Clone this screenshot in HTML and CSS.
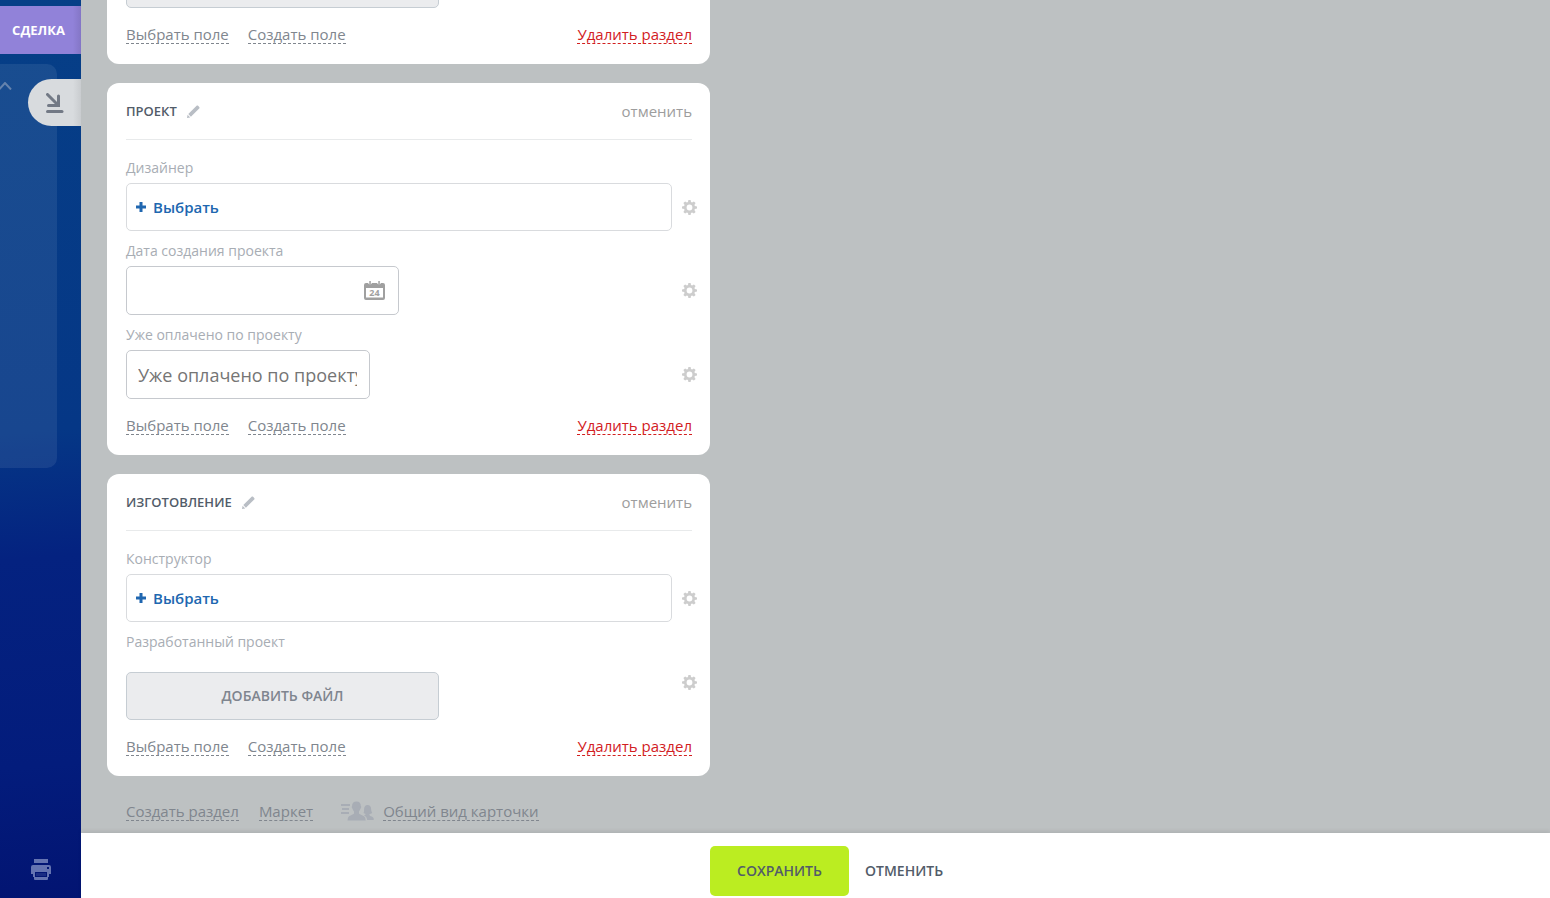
FILE: index.html
```html
<!doctype html>
<html lang="ru">
<head>
  <meta charset="UTF-8">
  <meta name="viewport" content="width=device-width, initial-scale=1.0">
  <title>Сделка</title>
  <link rel="stylesheet" href="styles.css">
</head>
<body>
  <!-- shared icons -->
  <svg class="sprite" aria-hidden="true">
    <symbol id="icon-gear" viewBox="0 0 15 15">
      <path fill-rule="evenodd" d="M6.400 0h2.200l.4 2.100 1.100.5L11.900 1.400l1.700 1.700-1.200 1.800.5 1.100 2.100.4v2.200l-2.100.4-.5 1.100 1.200 1.800-1.700 1.700-1.800-1.200-1.100.5L8.600 15H6.400L6 12.900l-1.100-.5-1.800 1.200-1.700-1.700 1.200-1.800L2.100 9 0 8.600V6.400L2.100 6l.5-1.100L1.400 3.100l1.700-1.700 1.800 1.200L6 2.100zM7.500 4.600a2.900 2.900 0 1 0 0 5.800 2.900 2.900 0 0 0 0-5.800z"/>
    </symbol>
    <symbol id="icon-pencil" viewBox="0 0 13 13">
      <path d="M0 13l.6-3.200 2.600 2.600zM1.300 8.900L9.600.8c.4-.5 1-.5 1.500 0l1.100 1.100c.5.500.5 1.100 0 1.500l-8.300 8.300z"/>
    </symbol>
    <symbol id="icon-plus" viewBox="0 0 10 10">
      <path d="M3.500 0h3v3.500H10v3H6.500V10h-3V6.500H0v-3h3.500z"/>
    </symbol>
  </svg>

  <aside class="rail">
    <div class="rail-tag">СДЕЛКА</div>
    <div class="rail-panel">
      <svg class="chevron" viewBox="0 0 12 8"><path d="M-1 7.500L5 1l6 6.500"/></svg>
    </div>
    <button class="rail-collapse" type="button" aria-label="Свернуть">
      <svg viewBox="0 0 18 20"><path d="M1.500 1.500L12 12M12.500 3v9.500H2.500"/><path d="M1.500 18.500h14.500"/></svg>
    </button>
    <button class="rail-print" type="button" aria-label="Печать">
      <svg viewBox="0 0 20 21">
        <path fill-rule="evenodd" d="M3 0h14v4H3zM2 6h16a2 2 0 0 1 2 2v7h-2v3h-1v2a1 1 0 0 1-1 1H4a1 1 0 0 1-1-1v-2H2v-3H0V8a2 2 0 0 1 2-2zm2 7v5h12v-5zm12-5v2h2V8z"/>
        <path d="M5 14h10v3H5z" opacity=".25"/>
      </svg>
    </button>
  </aside>

  <main class="slider">
    <div class="content">
      <section class="card">
        <div class="field file-field">
          <div class="field-row">
            <div class="control"><button class="file-btn" type="button" aria-label="Добавить файл"></button></div>
          </div>
        </div>
        <div class="card-actions">
          <a href="#" class="link">Выбрать поле</a>
          <a href="#" class="link">Создать поле</a>
          <a href="#" class="link link-danger">Удалить раздел</a>
        </div>
      </section>

      <section class="card">
        <header class="card-header">
          <h2>ПРОЕКТ</h2>
          <button class="icon-btn" type="button" aria-label="Переименовать"><svg class="pencil"><use href="#icon-pencil"/></svg></button>
          <button class="cancel-link" type="button">отменить</button>
        </header>
        <div class="field">
          <label for="designer">Дизайнер</label>
          <div class="field-row">
            <div class="control"><button class="picker" id="designer" type="button"><svg class="plus"><use href="#icon-plus"/></svg>Выбрать</button></div>
            <button class="icon-btn" type="button" aria-label="Настройки"><svg class="gear"><use href="#icon-gear"/></svg></button>
          </div>
        </div>
        <div class="field">
          <label for="date">Дата создания проекта</label>
          <div class="field-row">
            <div class="control">
              <div class="date-box">
                <input id="date" type="text">
                <svg class="calendar" viewBox="0 0 21 19">
                  <path fill-rule="evenodd" d="M2 2h2a2.200 2.200 0 0 0 4 0h5a2.200 2.200 0 0 0 4 0h2a2 2 0 0 1 2 2v13a2 2 0 0 1-2 2H2a2 2 0 0 1-2-2V4a2 2 0 0 1 2-2zm0 5v9.500h17V7z"/>
                  <path d="M5.300 0h1.500v3H5.300zM14.300 0h1.500v3h-1.500z"/>
                  <text x="10.500" y="15" text-anchor="middle">24</text>
                </svg>
              </div>
            </div>
            <button class="icon-btn" type="button" aria-label="Настройки"><svg class="gear"><use href="#icon-gear"/></svg></button>
          </div>
        </div>
        <div class="field">
          <label for="paid">Уже оплачено по проекту</label>
          <div class="field-row">
            <div class="control"><input class="text-box" id="paid" type="text" placeholder="Уже оплачено по проекту"></div>
            <button class="icon-btn" type="button" aria-label="Настройки"><svg class="gear"><use href="#icon-gear"/></svg></button>
          </div>
        </div>
        <div class="card-actions">
          <a href="#" class="link">Выбрать поле</a>
          <a href="#" class="link">Создать поле</a>
          <a href="#" class="link link-danger">Удалить раздел</a>
        </div>
      </section>

      <section class="card">
        <header class="card-header">
          <h2>ИЗГОТОВЛЕНИЕ</h2>
          <button class="icon-btn" type="button" aria-label="Переименовать"><svg class="pencil"><use href="#icon-pencil"/></svg></button>
          <button class="cancel-link" type="button">отменить</button>
        </header>
        <div class="field">
          <label for="builder">Конструктор</label>
          <div class="field-row">
            <div class="control"><button class="picker" id="builder" type="button"><svg class="plus"><use href="#icon-plus"/></svg>Выбрать</button></div>
            <button class="icon-btn" type="button" aria-label="Настройки"><svg class="gear"><use href="#icon-gear"/></svg></button>
          </div>
        </div>
        <div class="field file-field">
          <label for="file">Разработанный проект</label>
          <div class="field-row">
            <div class="control"><button class="file-btn" id="file" type="button">ДОБАВИТЬ ФАЙЛ</button></div>
            <button class="icon-btn" type="button" aria-label="Настройки"><svg class="gear"><use href="#icon-gear"/></svg></button>
          </div>
        </div>
        <div class="card-actions">
          <a href="#" class="link">Выбрать поле</a>
          <a href="#" class="link">Создать поле</a>
          <a href="#" class="link link-danger">Удалить раздел</a>
        </div>
      </section>

      <nav class="page-links">
        <a href="#" class="link">Создать раздел</a>
        <a href="#" class="link">Маркет</a>
        <svg class="people" viewBox="0 0 33 20">
          <path d="M0 3h9v2H0zM1 7h7v2H1zM0 11h8v2H0z"/>
          <path d="M15.500.5c3 0 4.500 2 4.300 4.600.8.600.3 2.200-.4 2.700-.3 1.300-.8 2-1.400 2.600v2c.5 1.200 5.500 1.800 6.200 4.300l.5 2.800H6.500l.5-2.800c.7-2.500 5.500-3.100 6-4.300v-2c-.7-.6-1.200-1.300-1.400-2.600-.8-.5-1.200-2.100-.5-2.700C10.900 2.500 12.500.5 15.500.5z"/>
          <path d="M26.500 4c2.500 0 3.700 1.700 3.600 4 .1 2 .8 3 1 4-.8.600-1.700.8-2.600.9v1.300c.5 1 3.700 1.200 4.200 3.300v1.500h-6.500c-.2-2.500-1.200-3.800-3.200-4.600.8-.5 1.500-.8 1.700-1.500-.9-.1-1.700-.4-2.200-.9.700-1 .5-2.300.6-4 .1-2.300 1.100-4 3.400-4z"/>
        </svg>
        <a href="#" class="link">Общий вид карточки</a>
      </nav>
    </div>

    <footer class="toolbar">
      <button class="save-btn" type="button">СОХРАНИТЬ</button>
      <button class="cancel-btn" type="button">ОТМЕНИТЬ</button>
    </footer>
  </main>
</body>
</html>
```

FILE: styles.css
```css
* {
    margin: 0;
    padding: 0;
    box-sizing: border-box;
}

body {
    display: flex;
    height: 100vh;
    overflow: hidden;
    background-color: #bdc1c2;
    color: #525c69;
    font-family: "Open Sans", "Noto Sans", sans-serif;
    font-size: 15px;
    line-height: 20px;
}

button,
input {
    font: inherit;
    color: inherit;
    background: none;
    border: none;
}

button {
    cursor: pointer;
}

svg {
    display: block;
    fill: currentColor;
}

.sprite {
    position: absolute;
    width: 0;
    height: 0;
}

/* Left rail */
.rail {
    position: relative;
    flex: none;
    width: 81px;
    padding-top: 6px;
    display: flex;
    flex-direction: column;
    background: linear-gradient(175deg, #063f87 0%, #053786 48%, #042280 62%, #031c7c 85%, #021472 100%);
}

.rail-tag {
    height: 48px;
    padding-right: 16px;
    background: linear-gradient(to right, #9182d9 90%, #8476c6);
    color: #fff;
    font-size: 13px;
    font-weight: 700;
    line-height: 48px;
    text-align: right;
}

.rail-panel {
    width: 57px;
    height: 45vh;
    margin-top: 10px;
    padding-top: 18px;
    border-radius: 0 10px 10px 0;
    background-color: rgba(255, 255, 255, 0.08);
}

.chevron {
    width: 12px;
    height: 8px;
    fill: none;
    stroke: #6583ad;
    stroke-width: 2;
}

.rail-collapse {
    position: absolute;
    top: 79px;
    right: 0;
    width: 53px;
    height: 47px;
    padding-left: 18px;
    border-radius: 24px 0 0 24px;
    background: linear-gradient(to right, #d8dbde 85%, #c9cccf);
    color: #727985;
}

.rail-collapse svg {
    width: 18px;
    height: 20px;
    fill: none;
    stroke: currentColor;
    stroke-width: 3;
    stroke-linecap: round;
}

.rail-print {
    margin: auto auto 18px;
    color: #6574b1;
}

.rail-print svg {
    width: 20px;
    height: 21px;
}

/* Slider */
.slider {
    flex: 1;
    min-width: 0;
    display: flex;
    flex-direction: column;
}

.content {
    flex: 1;
    min-height: 0;
    width: 629px;
    max-width: 100%;
    padding: 0 0 12px 26px;
    display: flex;
    flex-direction: column;
    justify-content: flex-end;
}

.card {
    flex: none;
    margin-bottom: 19px;
    padding: 0 18px 19px 19px;
    border-radius: 12px;
    background-color: #fff;
}

.card-header {
    display: flex;
    align-items: center;
    height: 57px;
    margin-bottom: 19px;
    border-bottom: 1px solid #e8eaeb;
}

.card-header h2 {
    margin-right: 10px;
    font-size: 13px;
    font-weight: 600;
}

.icon-btn {
    flex: none;
    color: #b9bec5;
}

.pencil {
    width: 13px;
    height: 13px;
}

.cancel-link {
    margin-left: auto;
    color: #9d9d9d;
}

.field {
    margin-right: -5px;
    margin-bottom: 11px;
}

.field label {
    display: block;
    margin-bottom: 6px;
    color: #a8adb4;
    font-size: 14px;
    line-height: 18px;
}

.field-row {
    display: flex;
    align-items: center;
    gap: 10px;
}

.control {
    flex: 1;
    min-width: 0;
}

.gear {
    width: 15px;
    height: 15px;
    color: #cdcdcd;
}

.picker {
    display: flex;
    align-items: center;
    gap: 7px;
    width: 100%;
    height: 48px;
    padding-left: 9px;
    border: 1px solid #d9dbde;
    border-radius: 5px;
    color: #2067b0;
    font-weight: 600;
}

.plus {
    width: 10px;
    height: 10px;
}

.date-box {
    display: flex;
    align-items: center;
    width: 50%;
    height: 49px;
    padding: 0 13px 0 11px;
    border: 1px solid #c6c9ce;
    border-radius: 5px;
}

.date-box input {
    flex: 1;
    min-width: 0;
    height: 100%;
    outline: none;
}

.calendar {
    width: 21px;
    height: 19px;
    color: #a0a0a0;
}

.calendar text {
    font-size: 9px;
    font-weight: 700;
}

.text-box {
    display: block;
    width: 244px;
    height: 49px;
    padding: 0 12px 0 11px;
    border: 1px solid #c6c9ce;
    border-radius: 5px;
    font-size: 18px;
}

.text-box::placeholder {
    color: #757575;
}

.file-field .field-row {
    align-items: flex-start;
}

.file-field .control {
    padding-top: 15px;
}

.file-field .icon-btn {
    padding-top: 18px;
}

.file-btn {
    display: block;
    width: 313px;
    height: 48px;
    border: 1px solid #c6cdd3;
    border-radius: 5px;
    background-color: #ebecee;
    color: #7f858f;
    font-size: 14px;
    font-weight: 600;
}

.card-actions {
    display: flex;
    gap: 19px;
    padding-top: 6px;
}

.link {
    height: 19px;
    border-bottom: 1px dashed currentColor;
    color: #80868e;
    line-height: 18px;
    text-decoration: none;
    white-space: nowrap;
}

.card-actions .link {
    margin-bottom: 1px;
}

.link-danger {
    margin-left: auto;
    color: #d2201f;
}

.page-links {
    display: flex;
    gap: 20px;
    margin-top: 7px;
    padding-left: 19px;
}

.people {
    width: 33px;
    height: 20px;
    margin: -1px -11px 0 8px;
    color: #a8adb5;
}

/* Bottom toolbar */
.toolbar {
    position: relative;
    flex: none;
    display: flex;
    align-items: center;
    height: 65px;
    padding: 11px 0 0 629px;
    background-color: #fff;
    box-shadow: 0 -2px 4px rgba(0, 0, 0, 0.08);
    font-size: 14px;
}

.save-btn {
    width: 139px;
    height: 50px;
    border-radius: 5px;
    background-color: #bbed21;
    font-weight: 600;
}

.cancel-btn {
    padding: 0 16px;
    font-weight: 600;
}
```
